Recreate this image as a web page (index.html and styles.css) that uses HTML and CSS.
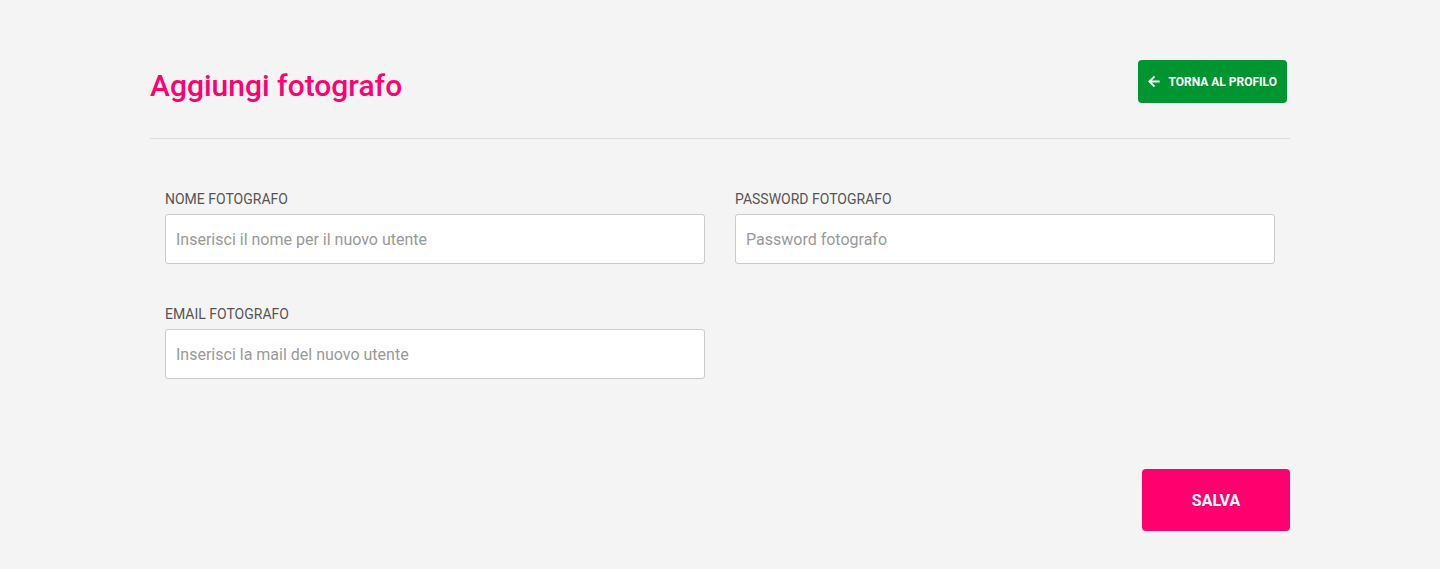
FILE: index.html
```html
<!DOCTYPE html>
<html lang="it">
<head>
  <meta charset="UTF-8" />
  <meta name="viewport" content="width=device-width, initial-scale=1.0" />
  <title>Aggiungi fotografo</title>
  <link rel="stylesheet" href="styles.css">
</head>
<body>
  <div class="container">
    <div class="page-header">
      <h1>Aggiungi fotografo</h1>
      <a class="btn-back" href="#">
        <svg class="icon" viewBox="0 0 448 512" width="12" height="13"><path fill="currentColor" d="M257.5 445.1l-22.2 22.2c-9.4 9.4-24.6 9.4-33.9 0L7 273c-9.4-9.4-9.4-24.6 0-33.9L201.4 44.7c9.4-9.4 24.6-9.4 33.9 0l22.2 22.2c9.5 9.5 9.3 25-.4 34.3L136.6 216H424c13.3 0 24 10.7 24 24v32c0 13.3-10.7 24-24 24H136.6l120.5 114.8c9.8 9.3 10 24.8.4 34.3z"/></svg>
        TORNA AL PROFILO
      </a>
    </div>

    <form class="form" onsubmit="return false">
      <div class="grid">
        <div class="field">
          <label for="nome">NOME FOTOGRAFO</label>
          <input type="text" id="nome" placeholder="Inserisci il nome per il nuovo utente" />
        </div>
        <div class="field">
          <label for="pwd">PASSWORD FOTOGRAFO</label>
          <input type="password" id="pwd" placeholder="Password fotografo" />
        </div>
        <div class="field">
          <label for="email">EMAIL FOTOGRAFO</label>
          <input type="email" id="email" placeholder="Inserisci la mail del nuovo utente" />
        </div>
      </div>
    </form>

    <div class="actions">
      <button class="btn-save" type="button">SALVA</button>
    </div>
  </div>
</body>
</html>
```

FILE: styles.css
```css
* { box-sizing: border-box; }
body { margin: 0; background: #f4f4f4; font-family: Roboto, "Liberation Sans", sans-serif; color: #333; }
.container { width: 1140px; margin: 0 auto; padding-top: 60px; }
.page-header { display: flex; justify-content: space-between; align-items: flex-start; padding-bottom: 34px; border-bottom: 1px solid #dcdcdc; }
h1 { margin: 8px 0 0; font-size: 30px; line-height: 36px; font-weight: 500; color: #ff0071; }
.btn-back { display: flex; align-items: center; gap: 8px; height: 43px; margin-right: 3px; padding: 0 10px; background: #009530; color: #fff; font-size: 12px; font-weight: 700; text-decoration: none; border-radius: 4px; }
.btn-back .icon { display: block; }
.form { padding: 51px 15px 0; }
.grid { display: grid; grid-template-columns: 540px 540px; column-gap: 30px; row-gap: 41px; }
.field label { display: block; font-size: 14px; line-height: 19px; color: #555; margin-bottom: 5px; }
.field input { width: 100%; height: 50px; padding: 0 10px; border: 1px solid #cacaca; border-radius: 3px; background: #fff; font-family: inherit; font-size: 16px; color: #333; outline: none; }
.field input::placeholder { color: #999; }
.actions { display: flex; justify-content: flex-end; margin-top: 90px; }
.btn-save { width: 148px; height: 62px; border: none; border-radius: 4px; background: #ff006e; color: #fff; font-family: inherit; font-size: 16px; font-weight: 700; cursor: pointer; }
```
